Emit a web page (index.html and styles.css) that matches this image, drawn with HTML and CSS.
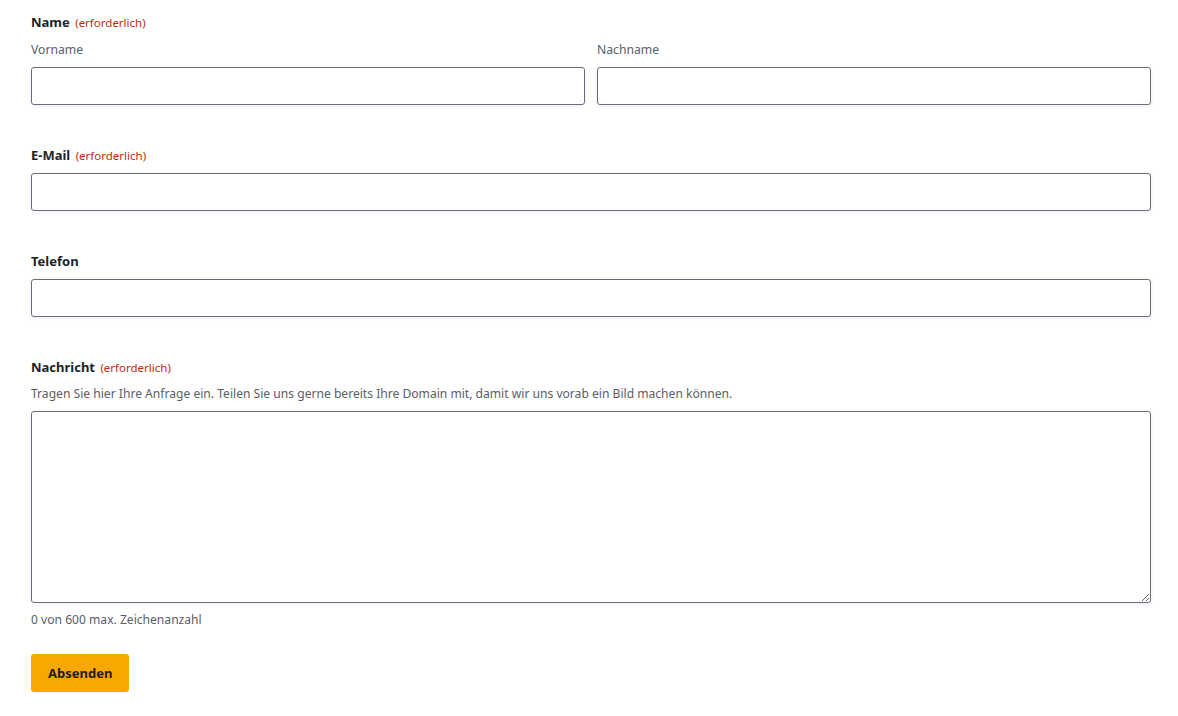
FILE: index.html
```html
<!DOCTYPE html>
<html>
  <head>
    <meta charset="utf-8" />
    <title>Kontakt</title>
    <link rel="stylesheet" href="styles.css">
  </head>
  <body>
    <form id="contact-form">
      <fieldset class="field">
        <legend class="field-label">Name <span class="required">(erforderlich)</span></legend>
        <div class="name-row">
          <div class="name-part">
            <label class="sub-label" for="vorname">Vorname</label>
            <input id="vorname" class="text-input" type="text" />
          </div>
          <div class="name-part">
            <label class="sub-label" for="nachname">Nachname</label>
            <input id="nachname" class="text-input" type="text" />
          </div>
        </div>
      </fieldset>

      <div class="field">
        <label class="field-label" for="email">E-Mail <span class="required">(erforderlich)</span></label>
        <input id="email" class="text-input" type="email" />
      </div>

      <div class="field">
        <label class="field-label" for="telefon">Telefon</label>
        <input id="telefon" class="text-input" type="tel" />
      </div>

      <div class="field field-message">
        <label class="field-label" for="nachricht">Nachricht <span class="required">(erforderlich)</span></label>
        <div class="description">Tragen Sie hier Ihre Anfrage ein. Teilen Sie uns gerne bereits Ihre Domain mit, damit wir uns vorab ein Bild machen können.</div>
        <textarea id="nachricht" class="text-area" maxlength="600"></textarea>
        <div class="counter" id="counter">0 von 600 max. Zeichenanzahl</div>
      </div>

      <button id="sendBtn" type="button">Absenden</button>
    </form>

    <script>
      // Update the character counter while typing
      const messageInput = document.getElementById("nachricht");
      const counter = document.getElementById("counter");
      messageInput.addEventListener("input", () => {
        counter.textContent = messageInput.value.length + " von 600 max. Zeichenanzahl";
      });
    </script>
  </body>
</html>
```

FILE: styles.css
```css
/* Contact form styling */
body {
  font-family: "Noto Sans", "Open Sans", sans-serif;
  background-color: #fff;
  color: #1d2327;
  margin: 0;
  padding: 0;
}
#contact-form {
  width: 1120px;
  margin: 0 0 0 31px;
  padding-top: 12px;
}
.field {
  border: none;
  margin: 0 0 40px 0;
  padding: 0;
  min-width: 0;
}
.field-label {
  display: block;
  padding: 0;
  font-size: 13px;
  font-weight: 700;
  line-height: 20px;
  margin-bottom: 8px;
  color: #1d2327;
}
.required {
  font-size: 11.5px;
  font-weight: 400;
  line-height: 1;
  color: #c02b0a;
  margin-left: 2px;
}
.name-row {
  display: flex;
  gap: 12px;
}
.name-part {
  flex: 1;
}
.sub-label {
  display: block;
  font-size: 12.2px;
  line-height: 18px;
  color: #585e6a;
  margin: 1px 0 8px 0;
}
.text-input, .text-area {
  display: block;
  box-sizing: border-box;
  width: 100%;
  height: 38px;
  border: 1px solid #686e77;
  border-radius: 3px;
  padding: 8px 12px;
  font-family: inherit;
  font-size: 14px;
  background: #fff;
  box-shadow: 0 1px 4px rgba(18, 25, 97, 0.08);
}
.text-area {
  height: 192px;
  resize: vertical;
}
.description, .counter {
  font-size: 12.1px;
  line-height: 18px;
  color: #585e6a;
  margin-bottom: 8px;
}
.counter {
  margin: 8px 0 0 0;
}
.field-message {
  margin-bottom: 25px;
}
#sendBtn {
  display: block;
  height: 38px;
  padding: 0 17px;
  border: none;
  border-radius: 3px;
  background-color: #f9a800;
  color: #1d1d1d;
  font-family: inherit;
  font-size: 13px;
  font-weight: 700;
  cursor: pointer;
}
```
